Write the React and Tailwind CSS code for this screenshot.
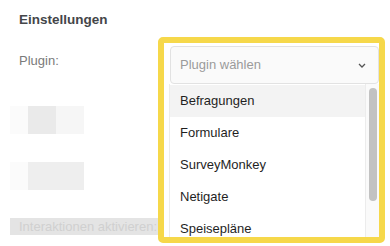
import React from "react";

const items = ["Befragungen", "Formulare", "SurveyMonkey", "Netigate", "Speisepläne"];

const App = () => {
  return (
    <div className="w-[390px] h-[246px] bg-white overflow-hidden font-['Liberation_Sans',Arial,sans-serif]">
      {/* ===== HEADER ===== */}
      <div className="pt-[11px] pl-[19px] h-[37px]">
        <h2 className="text-[13.5px] leading-[18px] font-bold text-[#444649]">Einstellungen</h2>
      </div>

      <div className="flex">
        {/* ===== LEFT (blurred form) ===== */}
        <div className="w-[158px] shrink-0 pl-[10px]">
          <div className="mt-[16px] pl-[9px] text-[13px] leading-[16px] text-[#7a7a7a]">Plugin:</div>

          <div className="mt-[37px] flex h-[28px]">
            <div className="w-[18px] bg-[#fbfbfb]" />
            <div className="w-[28px] bg-[#eaeaea]" />
            <div className="w-[28px] bg-[#f6f6f6]" />
          </div>

          <div className="mt-[28px] flex h-[28px]">
            <div className="w-[18px] bg-[#fbfbfb]" />
            <div className="w-[56px] bg-[#eeeeee]" />
          </div>

          <div className="mt-[28px] h-[17px] bg-[#e4e4e4] flex items-center overflow-hidden whitespace-nowrap">
            <span className="pl-[9px] text-[13px] leading-[17px] text-[#d0d0d0]">
              Interaktionen aktivieren: ⓘ
            </span>
          </div>
        </div>

        {/* ===== HIGHLIGHTED SELECT ===== */}
        <div className="w-[227px] h-[206px] shrink-0 border-[6px] border-[#f6d84a] rounded-[5px] bg-white overflow-hidden pt-[3px] pl-[6px]">
          <div className="h-[38px] flex items-center justify-between border border-[#e2e2e2] rounded-[4px] bg-[#fafafa] pl-[9px] pr-[12px]">
            <span className="text-[13px] text-[#9b9b9b]">Plugin wählen</span>
            <svg width="8" height="5" viewBox="0 0 8 5" fill="none">
              <polyline points="1,1 4,4 7,1" stroke="#555" strokeWidth="1.3" />
            </svg>
          </div>

          <div className="flex border-l border-[#ececec] ml-[-1px] h-[160px]">
            <div className="flex-1 pt-px">
              {items.map((it, i) => (
                <div
                  key={it}
                  className={`h-[32px] flex items-center pl-[10px] text-[13px] text-[#1f1f1f] ${i === 0 ? "bg-[#f3f3f3]" : ""}`}
                >
                  {it}
                </div>
              ))}
            </div>
            <div className="w-[14px] border-l border-[#ececec] bg-[#fafafa] pt-[4px] flex justify-center">
              <div className="w-[8px] h-[113px] rounded-full bg-[#c2c2c2]" />
            </div>
          </div>
        </div>
      </div>
    </div>
  );
};

export default App;
